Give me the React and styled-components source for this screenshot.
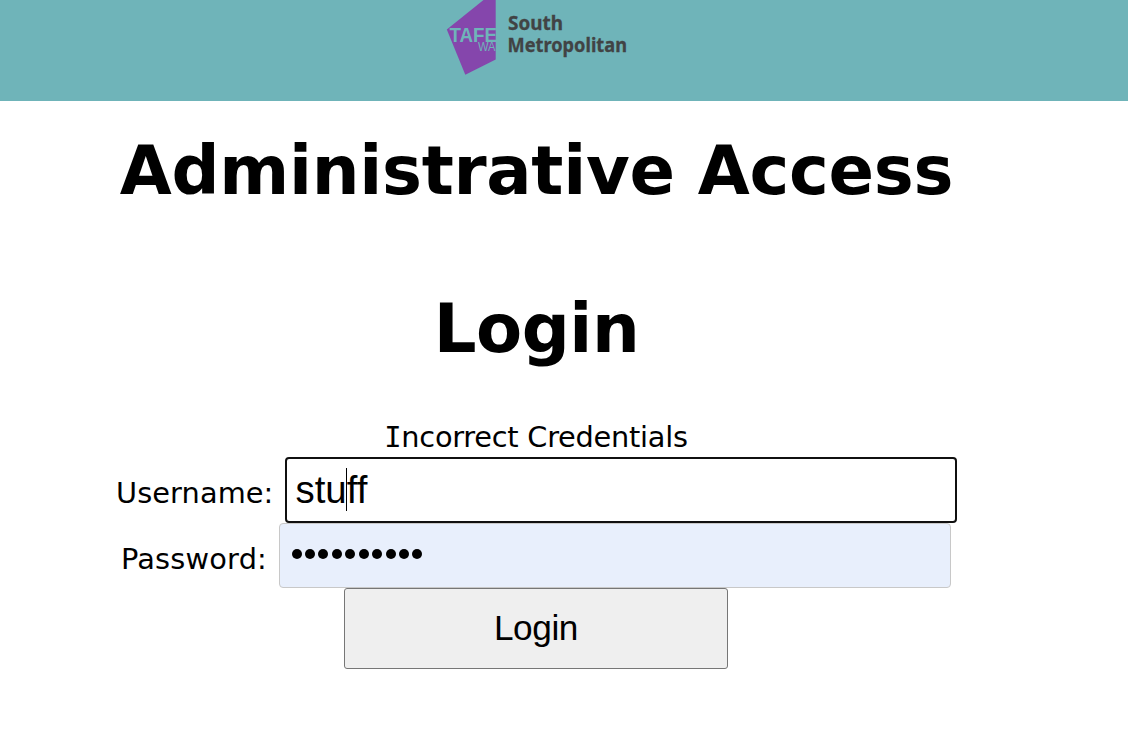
import React from "react";
import styled, { createGlobalStyle } from "styled-components";

const GlobalStyle = createGlobalStyle`
  * { box-sizing: border-box; }
  body { margin: 0; background: #fff; color: #000; overflow: hidden; }
`;

const Page = styled.div`
  height: 737px;
  font-family: Verdana, "DejaVu Sans", sans-serif;
`;

const Header = styled.header`
  height: 101px;
  padding-left: 440px;
  background: #6fb4b9;
`;

const Logo = styled.svg`
  display: block;
  width: 200px;
  height: 80px;
`;

const Main = styled.main`
  width: 1072px;
  display: flex;
  flex-direction: column;
  align-items: center;
`;

const Title = styled.h1`
  margin: ${(p) => p.$top}px 0 0;
  padding-left: 1px;
  font-size: 67.2px;
  line-height: 82px;
  font-weight: 700;
  letter-spacing: ${(p) => p.$spacing}px;
  white-space: nowrap;
`;

const Message = styled.p`
  margin: 49px 0 0;
  height: 38px;
  font-size: 28.8px;
  line-height: 37px;
  letter-spacing: -0.25px;
  white-space: nowrap;
  &::first-letter { font-family: "DejaVu Sans Mono", monospace; }
`;

const Field = styled.div`
  display: flex;
  height: ${(p) => p.$height}px;
`;

const Label = styled.label`
  width: ${(p) => p.$width}px;
  padding: 18px 0 0 ${(p) => p.$inset}px;
  font-size: 28.8px;
  line-height: 36px;
  letter-spacing: ${(p) => p.$spacing}px;
  white-space: nowrap;
`;

const Box = styled.div`
  position: relative;
  width: 672px;
  height: ${(p) => (p.$focused ? 66 : 65)}px;
  padding: ${(p) => (p.$focused ? "10px 8.5px" : "10px")};
  border: ${(p) => (p.$focused ? "2px solid #101010" : "1px solid #c8c8c8")};
  border-radius: 4px;
  background: ${(p) => (p.$focused ? "#fff" : "#e8effc")};
  font: 38.4px/42px "Liberation Sans", Arial, sans-serif;
`;

const Caret = styled.span`
  position: absolute;
  left: 59px;
  top: 9px;
  width: 1px;
  height: 43px;
  background: #000;
`;

const Dots = styled.div`
  display: flex;
  gap: 3.45px;
  padding: 15px 0 0 1.5px;
`;

const Dot = styled.i`
  width: 10px;
  height: 10px;
  border-radius: 50%;
  background: #000;
`;

const Submit = styled.button`
  width: 384px;
  height: 81px;
  padding: 0 0 1px;
  border: 1px solid #767676;
  border-radius: 3px;
  background: #efefef;
  color: #000;
  font: 35.2px "Liberation Sans", Arial, sans-serif;
  letter-spacing: -0.4px;
`;

export default function App() {
  return (
    <Page>
      <GlobalStyle />
      <Header>
        <Logo viewBox="0 0 200 80" role="img" aria-label="TAFE WA South Metropolitan">
          <path d="M43.5 0H55.7V59.5L25.3 74.8L6.8 29.5Z" fill="#8546ac" />
          <g fontFamily="'Liberation Sans', Arial, sans-serif" fill="#6fb4b9">
            <text x="9.5" y="42" fontSize="21" fontWeight="700" textLength="47.5" lengthAdjust="spacingAndGlyphs">TAFE</text>
            <text x="38" y="51.2" fontSize="12" textLength="17.5" lengthAdjust="spacingAndGlyphs">WA</text>
          </g>
          <g fontFamily="'Noto Sans', sans-serif" fontWeight="700" fontSize="20" fill="#414344" stroke="#414344" strokeWidth="0.3">
            <text x="68" y="30" textLength="55" lengthAdjust="spacingAndGlyphs">South</text>
            <text x="67.5" y="51.5" textLength="119.5" lengthAdjust="spacingAndGlyphs">Metropolitan</text>
          </g>
        </Logo>
      </Header>
      <Main>
        <Title $top={29} $spacing={-0.3}>Administrative Access</Title>
        <Title $top={76} $spacing={-0.5}>Login</Title>
        <Message>Incorrect Credentials</Message>
        <Field $height={66}>
          <Label $width={170} $inset={1} $spacing={0.1}>Username:</Label>
          <Box $focused>
            stuff
            <Caret />
          </Box>
        </Field>
        <Field $height={65}>
          <Label $width={158} $inset={0} $spacing={0.2}>Password:</Label>
          <Box>
            <Dots>
              {Array.from({ length: 10 }, (_, i) => <Dot key={i} />)}
            </Dots>
          </Box>
        </Field>
        <Submit>Login</Submit>
      </Main>
    </Page>
  );
}
